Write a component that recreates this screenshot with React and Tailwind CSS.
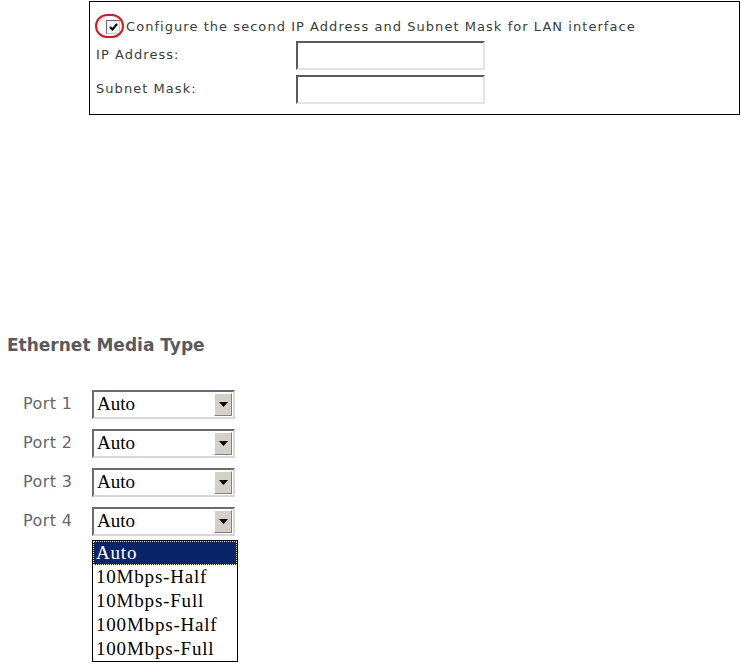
import { useState } from "react";

const ports = ["Port 1", "Port 2", "Port 3", "Port 4"];
const options = ["Auto", "10Mbps-Half", "10Mbps-Full", "100Mbps-Half", "100Mbps-Full"];

function TextBox() {
  return (
    <div className="h-[29px] w-[189px] border-2 border-t-[#5a5a5a] border-l-[#5a5a5a] border-b-[#e4e4e4] border-r-[#e4e4e4] bg-white" />
  );
}

function Arrow() {
  return (
    <div className="flex h-full w-[18px] items-center justify-center border border-t-white border-l-white border-b-[#808080] border-r-[#808080] bg-[#d4d0c8]">
      <svg width="9" height="5" viewBox="0 0 9 5">
        <polygon points="0,0 9,0 4.5,5" fill="#000" />
      </svg>
    </div>
  );
}

function Select({ value }) {
  return (
    <div className="flex h-[29px] w-[143px] border-2 border-t-[#6b6b6b] border-l-[#6b6b6b] border-b-[#d8d8d8] border-r-[#d8d8d8] bg-white p-px">
      <div className="flex-1 pl-[2px] font-['Liberation_Serif',serif] text-[19px] leading-[22px] text-black">
        {value}
      </div>
      <Arrow />
    </div>
  );
}

export default function App() {
  const [checked, setChecked] = useState(true);
  return (
    <div className="min-h-[667px] w-[741px] bg-white">
      <div className="ml-[89px] mt-[1px] h-[114px] w-[651px] border border-black pl-[6px] pt-[15px] font-['DejaVu_Sans',sans-serif] text-[13px] tracking-[1.05px] text-[#3c3c3c]">
        <div className="flex items-center">
          <div className="relative ml-[10px] mr-[6px] flex h-[18px] w-[14px] items-center justify-center" onClick={() => setChecked(!checked)}>
            <div className="flex h-[14px] w-[14px] items-center justify-center border border-t-[#6b6b6b] border-l-[#6b6b6b] border-b-[#c8c8c8] border-r-[#c8c8c8] bg-[#f4f4f4]">
              {checked && (
                <svg width="9" height="8" viewBox="0 0 9 8">
                  <polyline points="1,4 3.5,6.5 8,1" fill="none" stroke="#000" strokeWidth="2" />
                </svg>
              )}
            </div>
            <div className="absolute left-[-11px] top-[-4px] h-[24px] w-[29px] rounded-full border-2 border-[#e0141a]" />
          </div>
          <span>Configure the second IP Address and Subnet Mask for LAN interface</span>
        </div>
        <div className="mt-[4px] grid grid-cols-[200px_189px] gap-y-[5px] items-center">
          <span>IP Address:</span>
          <TextBox />
          <span>Subnet Mask:</span>
          <TextBox />
        </div>
      </div>

      <div className="ml-[7px] mt-[218px] font-['DejaVu_Sans',sans-serif] text-[17px] font-bold text-[#5a5a5e]">
        Ethernet Media Type
      </div>

      <div className="ml-[23px] mt-[31px] flex flex-col gap-[10px]">
        {ports.map((p) => (
          <div key={p} className="flex items-center">
            <span className="w-[69px] font-['DejaVu_Sans',sans-serif] text-[16px] tracking-[0.4px] text-[#666]">{p}</span>
            <Select value="Auto" />
          </div>
        ))}
      </div>

      <div className="ml-[92px] mt-[4px] w-[146px] border border-black bg-white font-['Liberation_Serif',serif] text-[19px] leading-[22px] tracking-[0.8px] text-black">
        {options.map((o, i) => (
          <div
            key={o}
            className={
              i === 0
                ? "border border-dotted border-[#e8e8a0] bg-[#0a246a] pl-[2px] text-white"
                : "border border-transparent pl-[2px]"
            }
          >
            {o}
          </div>
        ))}
      </div>
    </div>
  );
}
